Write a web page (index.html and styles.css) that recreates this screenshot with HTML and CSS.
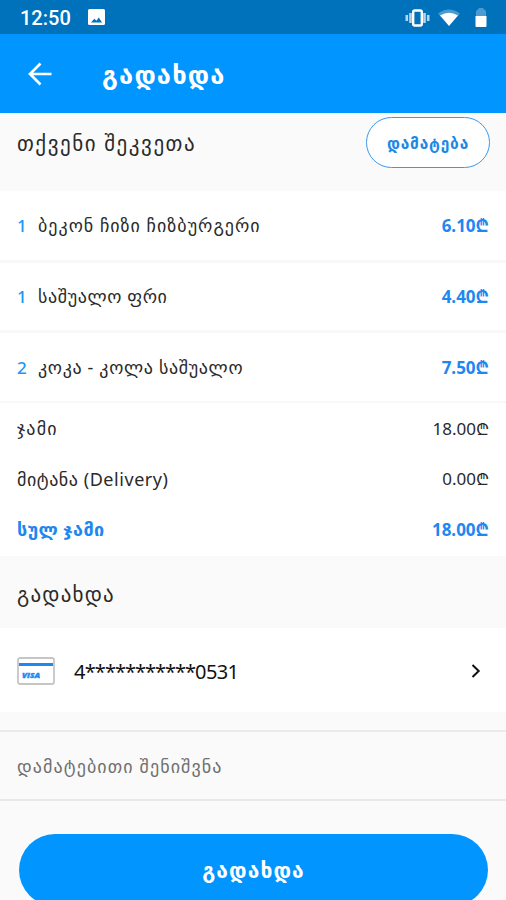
FILE: index.html
```html
<!DOCTYPE html>
<html lang="ka">
<head>
<meta charset="utf-8">
<meta name="viewport" content="width=device-width">
<title>გადახდა</title>
<link rel="stylesheet" href="styles.css">
</head>
<body>
<div class="status">
  <span class="clock">12:50</span>
  <svg class="photo" width="17" height="17" viewBox="0 0 17 17"><path fill="#fff" fill-rule="evenodd" d="M1.500 0h14A1.500 1.500 0 0 1 17 1.500v13A1.500 1.500 0 0 1 15.500 16h-14A1.500 1.500 0 0 1 0 14.500v-13A1.500 1.500 0 0 1 1.500 0zM3 13.500h11L10.800 8.500l-2.300 3.200-2.200-2z"/></svg>
  <div class="system">
    <svg width="25" height="18" viewBox="0 0 25 18"><rect x="8.200" y="1.500" width="8.600" height="15" rx="1.500" fill="none" stroke="#fff" stroke-width="2.400"/><path d="M5.500 4v10M19.500 4v10" stroke="#b5d5ed" stroke-width="2.600"/><path d="M1.800 6v6M23.200 6v6" stroke="#b5d5ed" stroke-width="2.600"/></svg>
    <svg class="wifi" width="22" height="17" viewBox="0 0 22 17"><path fill="#4b9bd0" d="M0 4.500Q11-3.500 22 4.500L19.500 7.500H2.500z"/><path fill="#fff" d="M2 6.500Q11 1 20 6.500L11 17z"/></svg>
    <svg class="battery" width="12" height="19" viewBox="0 0 12 19"><path fill="#4b9bd0" d="M1 9V3.500Q1 2 3 1.500L4 0h4l1 1.500Q11 2 11 3.500V9z"/><path fill="#fff" d="M.5 8h11v10q0 1-1 1h-9q-1 0-1-1z"/></svg>
  </div>
</div>
<header class="appbar">
  <svg class="back" width="24" height="24" viewBox="0 0 24 24"><path d="M23.500 12H2M12.500 1.500L2 12 12.500 22.500" fill="none" stroke="#fff" stroke-width="2.700"/></svg>
  <h1 class="title">გადახდა</h1>
</header>
<section class="heading order">
  <h2 class="order-title">თქვენი შეკვეთა</h2>
  <button class="add"><span>დამატება</span></button>
</section>
<ul class="items">
  <li><span class="qty">1</span><span class="name n1">ბეკონ ჩიზი ჩიზბურგერი</span><span class="price">6.10₾</span></li>
  <li><span class="qty">1</span><span class="name n2">საშუალო ფრი</span><span class="price">4.40₾</span></li>
  <li><span class="qty">2</span><span class="name n3">კოკა - კოლა საშუალო</span><span class="price">7.50₾</span></li>
</ul>
<section class="totals">
  <div class="line"><span class="t1">ჯამი</span><span class="amount">18.00₾</span></div>
  <div class="line"><span class="t2">მიტანა (Delivery)</span><span class="amount">0.00₾</span></div>
  <div class="line grand"><span class="t3">სულ ჯამი</span><span class="price">18.00₾</span></div>
</section>
<section class="heading payment"><h2 class="payment-title">გადახდა</h2></section>
<section class="card">
  <svg width="38" height="28" viewBox="0 0 38 28"><rect x="1" y="1" width="36" height="26" rx="2" fill="#fff" stroke="#c6c6c6" stroke-width="1.800"/><path d="M2 7.500h34" stroke="#1e88f0" stroke-width="3"/><text class="visa" x="5" y="21" textLength="18" lengthAdjust="spacingAndGlyphs">VISA</text></svg>
  <span class="number">4<span class="mask">***********</span>0531</span>
  <svg class="chevron" width="10" height="14" viewBox="0 0 10 14"><path d="M1.500 1L7.700 7 1.500 13" fill="none" stroke="#111" stroke-width="2"/></svg>
</section>
<section class="note"><span class="note-text">დამატებითი შენიშვნა</span></section>
<button class="pay"><span>გადახდა</span></button>
</body>
</html>
```
FILE: styles.css
```css
* { box-sizing: border-box; }
body { margin: 0; height: 900px; overflow: hidden; background: #fafafa; color: #2a2a2a; font-family: "Noto Sans", "DejaVu Sans", sans-serif; font-size: 18px; }
h1, h2, ul { margin: 0; padding: 0; font-weight: 400; }
button { font-family: inherit; cursor: pointer; }
svg { display: block; flex: none; }
span, h1, h2 { white-space: nowrap; }
.status { height: 34px; background: #0071bb; display: flex; align-items: center; padding: 1px 19px 0 20px; color: #fff; }
.clock { font: 500 20px/24px Roboto, sans-serif; width: 68px; }
.system { margin-left: auto; display: flex; align-items: center; }
.wifi { margin-left: 8px; }
.battery { margin-left: 15px; }
.appbar { height: 79px; background: #0095ff; display: flex; align-items: center; padding-left: 28px; }
.title { color: #fff; font-size: 25.500px; font-weight: 700; letter-spacing: 1.200px; margin-left: 50px; }
.heading { display: flex; align-items: center; justify-content: space-between; padding: 0 16px 0 17px; }
.order { height: 78px; padding-bottom: 19px; }
.order-title, .payment-title { font-size: 21px; }
.order-title { letter-spacing: 1.550px; }
.payment-title { letter-spacing: 1.200px; }
.add { width: 124px; height: 51px; border: 1.500px solid #3c98ee; border-radius: 26px; background: #fff; color: #1e88e5; font-size: 15.500px; font-weight: 600; letter-spacing: .8px; padding: 0; }
.items { list-style: none; background: #fff; }
.items li { height: 70px; border-bottom: 3px solid #f8f8f8; display: flex; align-items: center; padding: 0 17px; }
.items li:first-child { height: 72px; }
.items li:last-child { border-bottom-width: 2px; }
.qty { color: #1e96f5; width: 21px; font-size: 17px; font-weight: 500; }
.name { margin-top: -1px; }
.n1 { letter-spacing: 1px; }
.n2 { letter-spacing: .6px; }
.n3 { letter-spacing: .65px; }
.price, .amount { font-size: 17px; }
.price { color: #1e88f0; font-weight: 700; margin-left: auto; }
.totals { background: #fff; padding: 0 17px; height: 153px; }
.line { height: 50.600px; display: flex; align-items: center; justify-content: space-between; }
.t1 { letter-spacing: 1.200px; }
.t2 { letter-spacing: .55px; }
.t3 { letter-spacing: .3px; }
.grand { color: #1e88f0; font-weight: 700; }
.payment { height: 72px; padding-top: 3px; }
.card { height: 84px; background: #fff; display: flex; align-items: center; padding: 2px 25px 0 17px; }
.visa { font: italic 800 7.500px "Open Sans", sans-serif; fill: #1e88f0; stroke: #1e88f0; stroke-width: .4px; }
.number { font-size: 20px; letter-spacing: -.6px; margin-left: 19px; color: #111; }
.mask { letter-spacing: -1px; }
.chevron { margin-left: auto; }
.note { margin-top: 18px; height: 71px; border-top: 2px solid #ebebeb; border-bottom: 2px solid #e8e8e8; padding: 0 17px; display: flex; align-items: center; color: #707070; }
.note-text { letter-spacing: 1.100px; }
.pay { display: block; width: 469px; height: 72px; margin: 33px 0 0 19px; border: 0; border-radius: 36px; background: #0095ff; color: #fff; font-size: 21px; font-weight: 700; letter-spacing: 1.100px; }
```
